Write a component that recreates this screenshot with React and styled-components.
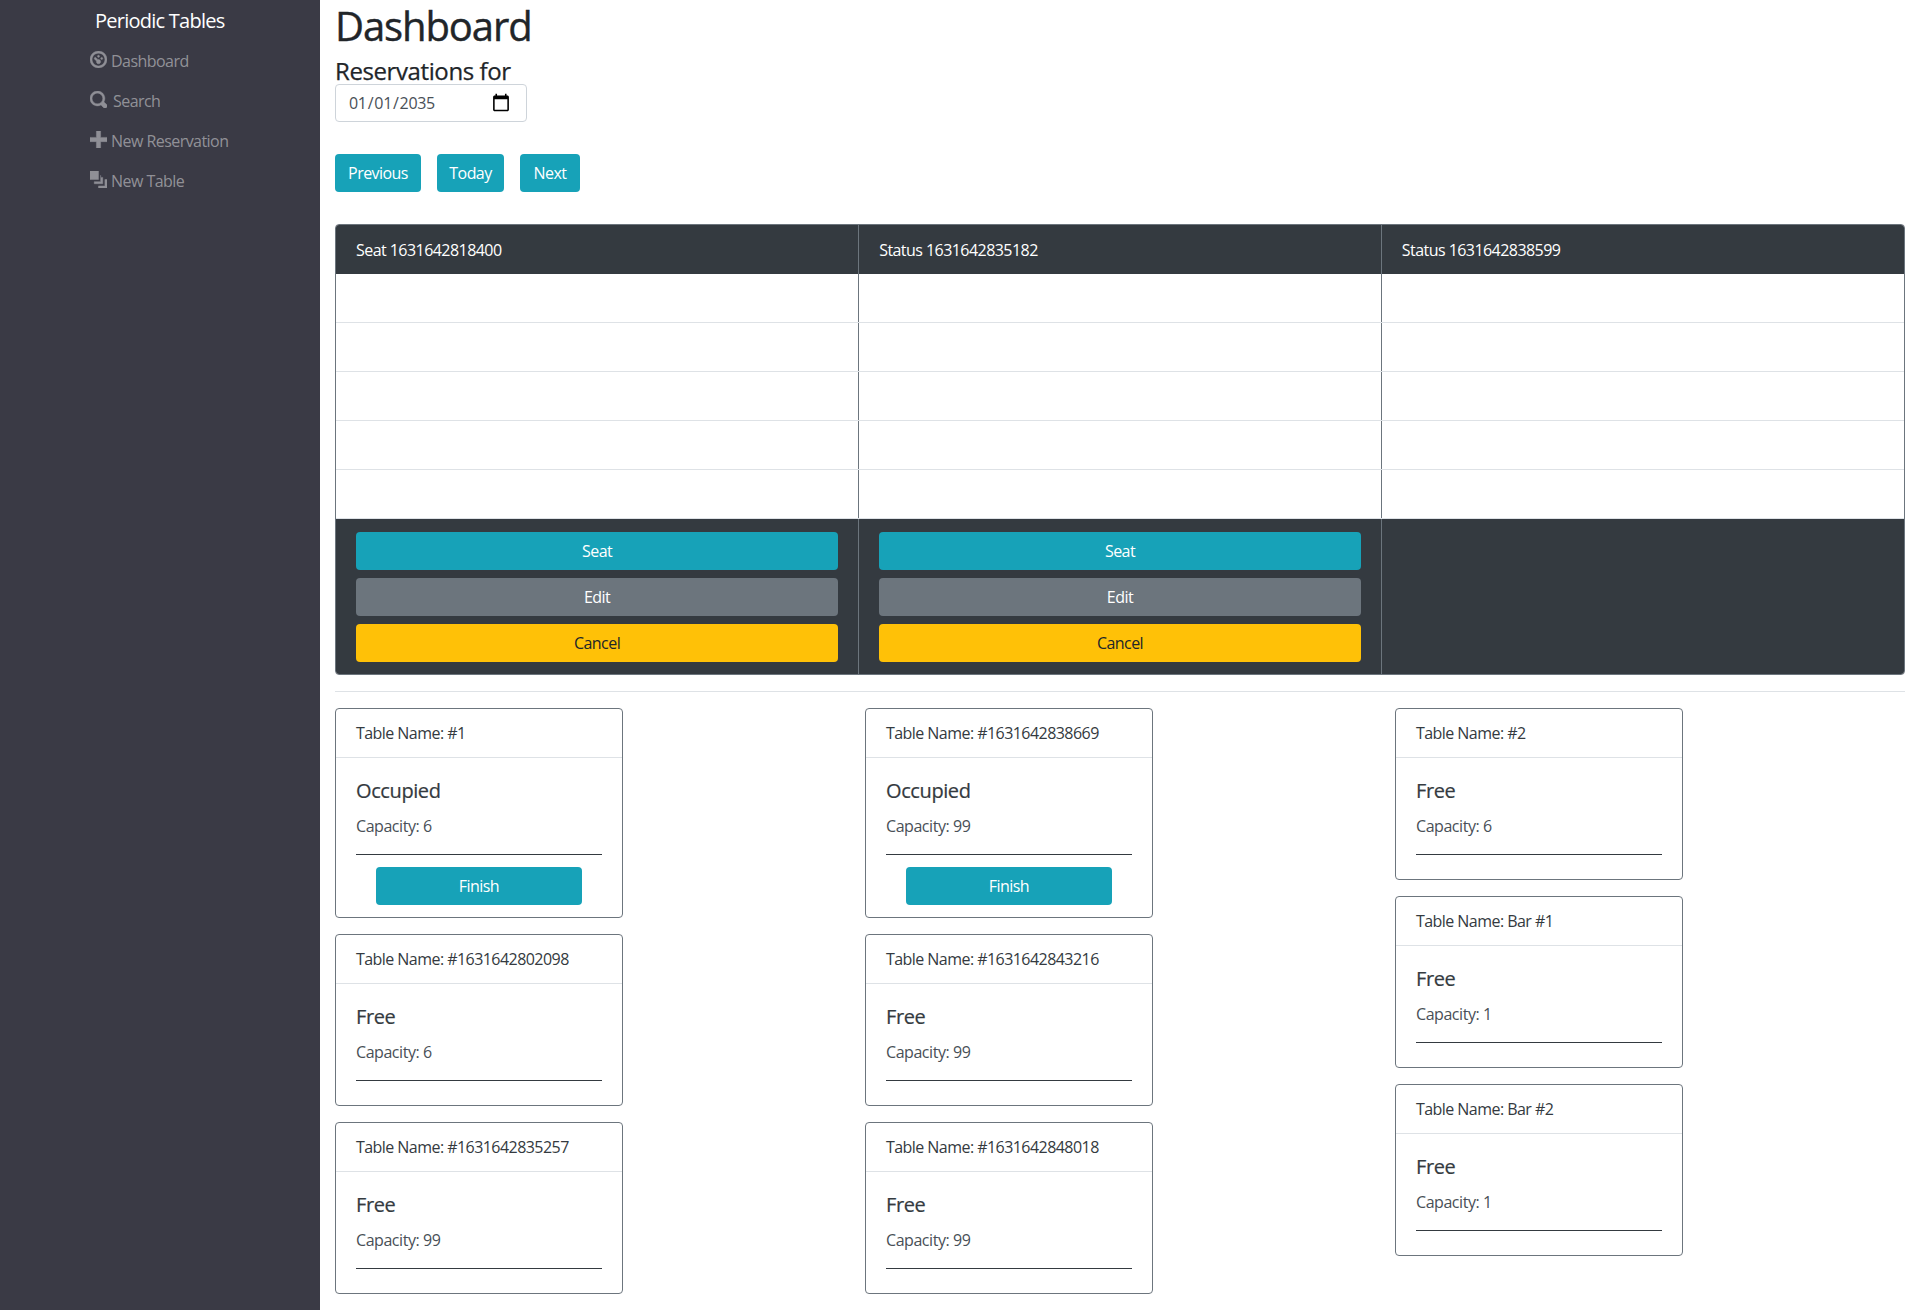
import React from 'react';
import styled, {createGlobalStyle} from 'styled-components';

const GlobalStyle = createGlobalStyle`
    * {box-sizing:border-box;}
    body {margin:0; font-family:"Open Sans", "Noto Sans", sans-serif; font-size:16px; line-height:1.5; color:#212529; background:#fff; letter-spacing:-0.55px;}
`;

const PageWrap = styled.div`
    display:flex;
    min-height:100vh;
`;

const SideBar = styled.nav`
    flex:0 0 320px;
    background-color:#3a3a45;
    padding:6px 0 0 90px;
`;

const Brand = styled.div`
    color:#fff;
    font-size:20px;
    line-height:30px;
    letter-spacing:-0.75px;
    margin:0 0 5px 5px;
    white-space:nowrap;
`;

const NavItem = styled.a`
    display:flex;
    align-items:center;
    height:40px;
    gap:${props => props.$gap}px;
    letter-spacing:-0.55px;
    color:rgba(255,255,255,.45);
    svg{flex:none; fill:#8f8f96; stroke:#8f8f96; stroke-width:.2; margin-top:-3px;}
`;

const Main = styled.main`
    flex:1;
    min-width:0;
    padding:0 15px;
`;

const Title = styled.h1`
    margin:0;
    font-size:40px;
    font-weight:500;
    line-height:52px;
    letter-spacing:-1.1px;
    -webkit-text-stroke:.4px #212529;
`;

const SubTitle = styled.h4`
    margin:0;
    font-size:24px;
    font-weight:500;
    line-height:37px;
    height:32px;
    letter-spacing:-0.4px;
    -webkit-text-stroke:.25px #212529;
`;

const DateInput = styled.input`
    display:block;
    width:192px;
    height:38px;
    padding:6px 12px;
    border:1px solid #ced4da;
    border-radius:4px;
    font:inherit;
    letter-spacing:-0.3px;
    color:#495057;
    &::-webkit-calendar-picker-indicator{width:20px; height:20px; margin-right:3px; padding:0;}
`;

const ButtonRow = styled.div`
    display:flex;
    gap:16px;
    margin:32px 0;
`;

const Button = styled.button`
    display:block;
    height:38px;
    width:${props => props.$width || "100%"};
    padding:0;
    border:none;
    border-radius:4px;
    font:inherit;
    letter-spacing:-0.55px;
    color:${props => props.$color === "#ffc107" ? "#212529" : "#fff"};
    background-color:${props => props.$color};
`;

const TableWrap = styled.div`
    border:1px solid #6c757d;
    border-radius:4px;
    overflow:hidden;
`;

const ResTable = styled.table`
    width:100%;
    table-layout:fixed;
    border-collapse:collapse;
    th, td{padding:0 20px; border-left:1px solid #6c757d;}
    th:first-child, td:first-child{border-left:none;}
    tbody tr:first-child td{height:48px;}
`;

const HeadCell = styled.th`
    height:49px;
    font-weight:400;
    text-align:left;
    color:#fff;
    background-color:#343a40;
`;

const BlankCell = styled.td`
    height:49px;
    border-bottom:1px solid #dee2e6;
`;

const FootCell = styled.td`
    height:156px;
    background-color:#343a40;
    &&{padding:13px 20px 11px;}
    vertical-align:top;
`;

const ButtonStack = styled.div`
    display:flex;
    flex-direction:column;
    gap:8px;
`;

const Divider = styled.hr`
    margin:16px 0;
    border:none;
    border-top:1px solid #dee2e6;
`;

const CardGrid = styled.div`
    display:grid;
    grid-template-columns:repeat(3, 500px);
    column-gap:30px;
`;

const CardColumn = styled.div`
    display:flex;
    flex-direction:column;
    gap:16px;
`;

const Card = styled.div`
    width:288px;
    border:1px solid #6c757d;
    border-radius:4px;
`;

const CardHeader = styled.div`
    height:49px;
    padding:12px 20px;
    border-bottom:1px solid #dee2e6;
    color:#343a40;
    white-space:nowrap;
`;

const CardBody = styled.div`
    padding:21px 20px 12px;
`;

const CardStatus = styled.h5`
    margin:0 0 11px;
    font-size:20px;
    font-weight:500;
    line-height:24px;
    letter-spacing:-0.4px;
    -webkit-text-stroke:.2px #343a40;
    color:#343a40;
`;

const CardText = styled.p`
    margin:0 0 16px;
    letter-spacing:-0.45px;
    color:#495057;
`;

const CardRule = styled.hr`
    margin:0 0 12px;
    border:none;
    border-top:1px solid #343a40;
`;

const FinishWrap = styled.div`
    padding:0 20px;
`;

const DashIcon = () => (
    <svg width="17" height="17" viewBox="0 0 8 8"><path d="M4 0c-2.2 0-4 1.8-4 4s1.8 4 4 4 4-1.8 4-4-1.8-4-4-4zm0 1c1.66 0 3 1.34 3 3s-1.34 3-3 3-3-1.34-3-3 1.34-3 3-3zm0 1c-.28 0-.5.22-.5.5s.22.5.5.5.5-.22.5-.5-.22-.5-.5-.5zm-1.66 1a.5.5 0 0 0-.19.84l.91.91c-.02.08-.06.16-.06.25 0 .55.45 1 1 1s1-.45 1-1-.45-1-1-1c-.09 0-.17.04-.25.06l-.91-.91a.5.5 0 0 0-.44-.16h-.06zm3.16 0c-.28 0-.5.22-.5.5s.22.5.5.5.5-.22.5-.5-.22-.5-.5-.5z"/></svg>
);
const SearchIcon = () => (
    <svg width="17" height="17" viewBox="0 0 8 8"><path d="M3.5 0c-1.93 0-3.5 1.57-3.5 3.5s1.57 3.5 3.5 3.5c.59 0 1.17-.14 1.66-.41a1 1 0 0 0 .13.13l1 1a1.02 1.02 0 1 0 1.44-1.44l-1-1a1 1 0 0 0-.16-.13c.27-.49.44-1.06.44-1.66 0-1.93-1.57-3.5-3.5-3.5zm0 1c1.39 0 2.5 1.11 2.5 2.5 0 .66-.24 1.27-.66 1.72-.01.01-.02.02-.03.03a1 1 0 0 0-.13.13c-.44.4-1.04.63-1.69.63-1.39 0-2.5-1.11-2.5-2.5s1.11-2.5 2.5-2.5z"/></svg>
);
const PlusIcon = () => (
    <svg width="17" height="17" viewBox="0 0 8 8"><path d="M3 0v3h-3v2h3v3h2v-3h3v-2h-3v-3h-2z"/></svg>
);
const LayersIcon = () => (
    <svg width="17" height="17" viewBox="0 0 8 8"><path d="M0 0v4h4v-4h-4zm5 2v3h-3v1h4v-3h-1zm2 2v3h-3v1h4v-4h-1z"/></svg>
);

const columns = [
    ["Seat 1631642818400", true],
    ["Status 1631642835182", true],
    ["Status 1631642838599", false],
];

const cardColumns = [
    [
        {name:"#1", status:"Occupied", capacity:6},
        {name:"#1631642802098", status:"Free", capacity:6},
        {name:"#1631642835257", status:"Free", capacity:99},
    ],
    [
        {name:"#1631642838669", status:"Occupied", capacity:99},
        {name:"#1631642843216", status:"Free", capacity:99},
        {name:"#1631642848018", status:"Free", capacity:99},
    ],
    [
        {name:"#2", status:"Free", capacity:6},
        {name:"Bar #1", status:"Free", capacity:1},
        {name:"Bar #2", status:"Free", capacity:1},
    ],
];

const App = () => {
    return(
        <PageWrap>
            <GlobalStyle/>
            <SideBar>
                <Brand>Periodic Tables</Brand>
                <NavItem $gap={4}><DashIcon/>Dashboard</NavItem>
                <NavItem $gap={6}><SearchIcon/>Search</NavItem>
                <NavItem $gap={4}><PlusIcon/>New Reservation</NavItem>
                <NavItem $gap={4}><LayersIcon/>New Table</NavItem>
            </SideBar>
            <Main>
                <Title>Dashboard</Title>
                <SubTitle>Reservations for</SubTitle>
                <DateInput type="date" defaultValue="2035-01-01"/>
                <ButtonRow>
                    <Button $width="86px" $color="#17a2b8">Previous</Button>
                    <Button $width="67px" $color="#17a2b8">Today</Button>
                    <Button $width="60px" $color="#17a2b8">Next</Button>
                </ButtonRow>
                <TableWrap>
                    <ResTable>
                        <thead>
                            <tr>
                                {columns.map(([label]) => <HeadCell key={label}>{label}</HeadCell>)}
                            </tr>
                        </thead>
                        <tbody>
                            {[0, 1, 2, 3, 4].map(row => (
                                <tr key={row}>
                                    {columns.map(([label]) => <BlankCell key={label}/>)}
                                </tr>
                            ))}
                        </tbody>
                        <tfoot>
                            <tr>
                                {columns.map(([label, hasActions]) => (
                                    <FootCell key={label}>
                                        {hasActions && (
                                            <ButtonStack>
                                                <Button $color="#17a2b8">Seat</Button>
                                                <Button $color="#6c757d">Edit</Button>
                                                <Button $color="#ffc107">Cancel</Button>
                                            </ButtonStack>
                                        )}
                                    </FootCell>
                                ))}
                            </tr>
                        </tfoot>
                    </ResTable>
                </TableWrap>
                <Divider/>
                <CardGrid>
                    {cardColumns.map((cards, i) => (
                        <CardColumn key={i}>
                            {cards.map(card => (
                                <Card key={card.name}>
                                    <CardHeader>Table Name: {card.name}</CardHeader>
                                    <CardBody>
                                        <CardStatus>{card.status}</CardStatus>
                                        <CardText>Capacity: {card.capacity}</CardText>
                                        <CardRule/>
                                        {card.status === "Occupied" && (
                                            <FinishWrap>
                                                <Button $color="#17a2b8">Finish</Button>
                                            </FinishWrap>
                                        )}
                                    </CardBody>
                                </Card>
                            ))}
                        </CardColumn>
                    ))}
                </CardGrid>
            </Main>
        </PageWrap>
    );
}

export default App;
